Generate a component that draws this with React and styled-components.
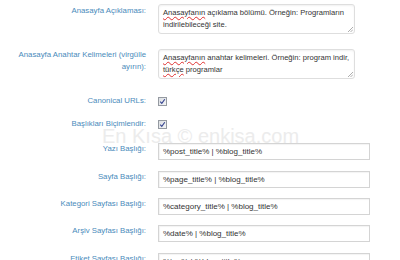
import React from 'react';
import styled, { createGlobalStyle } from 'styled-components';

const GlobalStyle = createGlobalStyle`
    body {
        margin: 0;
        background: #fff;
        font-family: "Liberation Sans", Arial, sans-serif;
    }
`;

const Page = styled.div`
    position: relative;
    width: 400px;
    height: 260px;
    overflow: hidden;
`;

const Form = styled.div`
    display: flex;
    flex-direction: column;
    padding: 4px 0 0 6px;
`;

const Row = styled.div`
    display: grid;
    grid-template-columns: 140px auto;
    column-gap: 12px;
    align-items: ${(p) => (p.$center ? 'center' : 'start')};
    margin-top: ${(p) => p.$gap || 0}px;
`;

const Label = styled.div`
    text-align: right;
    color: #4a8bbb;
    font-size: 7.8px;
    line-height: 12px;
    padding-top: ${(p) => p.$pt || 0}px;
`;

const TextArea = styled.div`
    position: relative;
    box-sizing: border-box;
    width: 197px;
    height: 30px;
    padding: 2px 4px;
    border: 1px solid #dedede;
    border-radius: 3px;
    box-shadow: inset 0 1px 2px rgba(0, 0, 0, 0.06);
    font-size: 7.6px;
    line-height: 11.5px;
    color: #333;
    white-space: nowrap;
`;

const Misspelled = styled.span`
    text-decoration: underline wavy #e03030;
    text-decoration-thickness: 1px;
    text-underline-offset: 1px;
`;

const Grip = styled.svg`
    position: absolute;
    right: 1px;
    bottom: 1px;
`;

const TextInput = styled.div`
    box-sizing: border-box;
    width: 212px;
    height: 17px;
    padding: 0 4px;
    border: 1px solid #d4d4d4;
    box-shadow: inset 1px 1px 1px rgba(0, 0, 0, 0.05);
    font-size: 8px;
    line-height: 15px;
    color: #333;
    white-space: nowrap;
`;

const Check = styled.span`
    display: inline-flex;
    align-items: center;
    justify-content: center;
    box-sizing: border-box;
    width: 9px;
    height: 9px;
    border: 1px solid #959aa1;
    background: linear-gradient(135deg, #dcdfe3, #f4f5f6);
`;

const Watermark = styled.div`
    position: absolute;
    left: 102px;
    top: 126px;
    font-size: 20px;
    line-height: 20px;
    color: #ececec;
    white-space: nowrap;
    pointer-events: none;
`;

const ResizeGrip = () => (
    <Grip width="6" height="6" viewBox="0 0 6 6">
        <path d="M1 6 L6 1 M3.5 6 L6 3.5" stroke="#999" strokeWidth="0.8" />
    </Grip>
);

const CheckBox = () => (
    <Check>
        <svg width="7" height="7" viewBox="0 0 7 7">
            <path d="M1.2 3.6 L2.8 5.4 L5.8 1.2" fill="none" stroke="#34428f" strokeWidth="1.1" />
        </svg>
    </Check>
);

const titles = [
    { label: 'Yazı Başlığı:', value: '%post_title% | %blog_title%', gap: 13 },
    { label: 'Sayfa Başlığı:', value: '%page_title% | %blog_title%', gap: 11 },
    { label: 'Kategori Sayfası Başlığı:', value: '%category_title% | %blog_title%', gap: 10 },
    { label: 'Arşiv Sayfası Başlığı:', value: '%date% | %blog_title%', gap: 10 },
    { label: 'Etiket Sayfası Başlığı:', value: '%tag% | %blog_title%', gap: 11 },
];

export default function App() {
    return (
        <Page>
            <GlobalStyle />
            <Form>
                <Row>
                    <Label $pt={1}>Anasayfa Açıklaması:</Label>
                    <TextArea>
                        <Misspelled>Anasayfanın</Misspelled> açıklama bölümü. Örneğin: Programların
                        <br />
                        indirilebileceği site.
                        <ResizeGrip />
                    </TextArea>
                </Row>
                <Row $gap={15}>
                    <Label $pt={0}>Anasayfa Anahtar Kelimeleri (virgülle ayırın):</Label>
                    <TextArea>
                        <Misspelled>Anasayfanın</Misspelled> anahtar kelimeleri. Örneğin: program indir,
                        <br />
                        <Misspelled>türkçe</Misspelled> programlar
                        <ResizeGrip />
                    </TextArea>
                </Row>
                <Row $gap={16} $center>
                    <Label>Canonical URLs:</Label>
                    <CheckBox />
                </Row>
                <Row $gap={11} $center>
                    <Label>Başlıkları Biçimlendir:</Label>
                    <CheckBox />
                </Row>
                {titles.map((t) => (
                    <Row key={t.label} $gap={t.gap}>
                        <Label>{t.label}</Label>
                        <TextInput>{t.value}</TextInput>
                    </Row>
                ))}
            </Form>
            <Watermark>En Kısa © enkisa.com</Watermark>
        </Page>
    );
}
